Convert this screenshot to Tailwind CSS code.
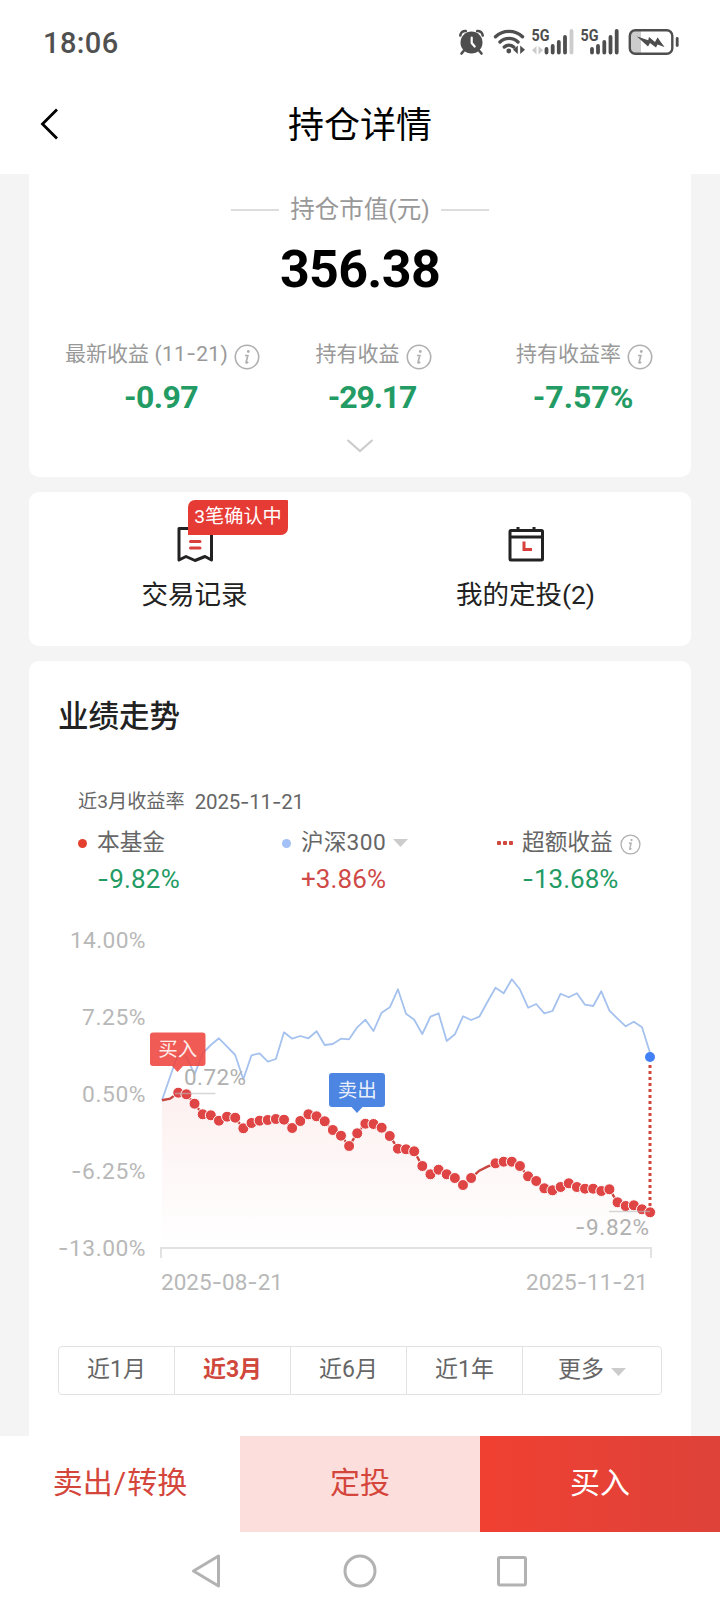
<!DOCTYPE html>
<html lang="zh-CN">
  <head>
    <meta charset="UTF-8" />
    <meta name="viewport" content="width=device-width, initial-scale=1.0" />
    <title>持仓详情</title>
    <script src="https://cdn.jsdelivr.net/npm/@tailwindcss/browser@4"></script>
  </head>

  <body class="w-[720px] h-[1610px] overflow-hidden bg-[#f4f4f4] flex flex-col whitespace-nowrap font-['Roboto','Noto_Sans_CJK_SC',sans-serif] text-[#222]">
    <!-- Status bar -->
    <div class="h-[84px] shrink-0 bg-white flex justify-between pl-[43px]">
      <div class="pt-[28px] text-[29px] leading-[30px] font-medium tracking-[0.4px] text-[#505050]">18:06</div>
      <svg class="w-[270px] h-[84px]" viewBox="450 0 270 84" fill="none" stroke-linecap="round">
        <!-- alarm -->
        <circle cx="471.5" cy="42.5" r="11" fill="#4e4e4e" />
        <path d="M460.3 35.5a5 5 0 0 1 5.5-4.500M482.7 35.5a5 5 0 0 0-5.5-4.500" stroke="#4e4e4e" stroke-width="2.6" />
        <path d="M464 50.5l-2.5 3M479 50.5l2.5 3" stroke="#4e4e4e" stroke-width="2.6" />
        <path d="M471.7 37.5v5.5l3 3.5" stroke="#fff" stroke-width="2.2" />
        <!-- wifi -->
        <path d="M495.5 36.800a19.5 19.5 0 0 1 27 0M500 42a13 13 0 0 1 18 0M504.3 47a7 7 0 0 1 9.4 0" stroke="#4e4e4e" stroke-width="3.4" />
        <circle cx="508.8" cy="51" r="2.4" fill="#4e4e4e" />
        <path d="M517.8 45.500v8.500l-4.800-4.250zM520.2 45.500v8.500l4.800-4.250z" fill="#4e4e4e" />
        <!-- signal 1 -->
        <text x="531.500" y="41" font-size="16.500" font-weight="700" fill="#4e4e4e" textLength="18" lengthAdjust="spacingAndGlyphs">5G</text>
        <path d="M536.500 46v8.500l-4.500-4.250zM538.500 46v8.500l4.500-4.250z" fill="#ccc" />
        <path d="M546.500 49v3.500M552.700 46v6.500M558.800 42v10.500M565 37v15.500" stroke="#4e4e4e" stroke-width="3.800" />
        <path d="M571.500 31v21.500" stroke="#ccc" stroke-width="3.800" />
        <!-- signal 2 -->
        <text x="580.500" y="41" font-size="16.500" font-weight="700" fill="#4e4e4e" textLength="18" lengthAdjust="spacingAndGlyphs">5G</text>
        <path d="M592 49v3.500M598 46v6.500M604.300 42v10.500M610.500 37v15.500M616.700 31v21.500" stroke="#4e4e4e" stroke-width="3.800" />
        <!-- battery -->
        <path d="M635 31h6v22h-6a5 5 0 0 1-5-5v-12a5 5 0 0 1 5-5z" fill="#ccc" />
        <rect x="629.800" y="30.300" width="42.500" height="23.400" rx="5.500" stroke="#4e4e4e" stroke-width="2.400" />
        <path d="M637 36.500l11 4.500 1-4 6 5 2.500-4.500 7 9.500-7-2.500-1.500 3-6-4.500-2 3.500z" fill="#4e4e4e" />
        <path d="M664 47l-8-5 2-4 2 5zM637 36.500l12 4v4z" fill="#4e4e4e" />
        <path d="M677.200 38.500v7" stroke="#4e4e4e" stroke-width="2.800" />
      </svg>
    </div>

    <!-- Title bar -->
    <header class="h-[90px] shrink-0 bg-white grid grid-cols-[120px_1fr_120px]">
      <svg class="w-[120px] h-[90px]" viewBox="0 84 120 90" fill="none">
        <path d="M57 109.500L42.500 124L57 138.500" stroke="#000" stroke-width="2.800" />
      </svg>
      <h1 class="text-center text-[36px] leading-[84px] text-black">持仓详情</h1>
    </header>

    <main class="h-[1262px] shrink-0 overflow-hidden px-[29px] flex flex-col gap-[15px]">
      <!-- Holdings -->
      <section class="h-[303px] shrink-0 bg-white rounded-b-[10px] pt-[20px]">
        <div class="flex items-center justify-center gap-[11px] text-[24.500px] leading-[32px] text-[#999]">
          <span class="w-[48px] h-[2px] bg-[#ddd]"></span>
          <span>持仓市值(元)</span>
          <span class="w-[48px] h-[2px] bg-[#ddd]"></span>
        </div>
        <div class="mt-[14px] text-center text-[52px] leading-[60px] font-bold tracking-[-0.700px] text-black">356.38</div>
        <div class="mt-[37px] flex text-[#999]">
          <div class="w-[267px] flex flex-col items-center">
            <div class="flex items-center gap-[6px] text-[21px] leading-[34px]">
              <span>最新收益<span class="tracking-[0.300px]"> (11<span class="font-['Inter']">-</span>21)</span></span>
              <svg class="size-[26px] mt-[5px]" viewBox="0 0 26 26"><use href="#info" /></svg>
            </div>
            <div class="mt-[8px] pr-[3px] text-[32px] leading-[36px] font-bold tracking-[-0.600px] text-[#239b64]">-0.97</div>
          </div>
          <div class="w-[155px] flex flex-col items-center">
            <div class="flex items-center gap-[6px] text-[21px] leading-[34px]">
              <span>持有收益</span>
              <svg class="size-[26px] mt-[5px]" viewBox="0 0 26 26"><use href="#info" /></svg>
            </div>
            <div class="mt-[8px] pr-[3px] text-[32px] leading-[36px] font-bold tracking-[-1.100px] text-[#239b64]">-29.17</div>
          </div>
          <div class="w-[268px] -mr-[28px] pr-[1px] flex flex-col items-center">
            <div class="flex items-center gap-[6px] text-[21px] leading-[34px]">
              <span>持有收益率</span>
              <svg class="size-[26px] mt-[5px]" viewBox="0 0 26 26"><use href="#info" /></svg>
            </div>
            <div class="mt-[8px] pr-[3px] text-[32px] leading-[36px] font-bold text-[#239b64]">-7.57%</div>
          </div>
        </div>
        <svg class="mx-auto mt-[23px] w-[28px] h-[16px]" viewBox="0 0 28 16" fill="none">
          <path d="M1.500 2L14 13L26.500 2" stroke="#ccc" stroke-width="2.200" />
        </svg>
      </section>

      <!-- Shortcuts -->
      <section class="h-[154px] shrink-0 bg-white rounded-[10px] grid grid-cols-2 text-[26.500px] leading-[36px]">
        <div class="relative flex flex-col items-center pt-[33px]">
          <svg class="w-[38px] h-[38px]" viewBox="0 0 38 38" fill="none">
            <path d="M3 3.500H35.500V35L29 31.500L19 35.500L10 31.500L3 35Z" stroke="#222" stroke-width="3" stroke-linejoin="round" />
            <path d="M14.500 16.500H24M14.500 23H24" stroke="#d8403c" stroke-width="3" stroke-linecap="round" />
          </svg>
          <span class="mt-[14px]">交易记录</span>
          <span class="absolute left-[159px] top-[8px] w-[100px] h-[35px] rounded-tl-[7px] rounded-br-[7px] rounded-tr-[1px] bg-[#e63a35] text-center text-[19.200px] leading-[34px] text-white">3笔确认中</span>
        </div>
        <div class="flex flex-col items-center pt-[33px]">
          <svg class="w-[38px] h-[38px]" viewBox="0 0 38 38" fill="none">
            <rect x="3" y="5.500" width="32.500" height="29.500" rx="1" stroke="#222" stroke-width="3" />
            <path d="M3 12H35.500M11 2V5M27 2V5" stroke="#222" stroke-width="3" />
            <path d="M17 16.500V24.500H25" stroke="#d8403c" stroke-width="3" />
          </svg>
          <span class="mt-[14px]">我的定投(2)</span>
        </div>
      </section>

      <!-- Performance -->
      <section class="h-[783px] shrink-0 bg-white rounded-[10px] px-[29px] pt-[36px]">
        <h2 class="text-[30.500px] leading-[40px] font-medium">业绩走势</h2>
        <div class="mt-[50px] pl-[20px] flex gap-[10px] text-[19.200px] leading-[30px] text-[#666]">
          <span>近3月收益率</span>
          <span class="text-[20.500px] tracking-[-0.200px]">2025<span class="font-['Inter']">-</span>11<span class="font-['Inter']">-</span>21</span>
        </div>
        <div class="mt-[9px] pl-[20px] flex text-[22.700px] leading-[34px] text-[#666]">
          <div class="w-[204px]">
            <div class="flex items-center">
              <span class="size-[9px] mr-[10px] rounded-full bg-[#e5402f]"></span>本基金
            </div>
            <div class="pl-[19px] mt-[2px] text-[26px] tracking-[0.200px] text-[#239b64]"><span class="font-['Inter']">-</span>9.82%</div>
          </div>
          <div class="w-[215px]">
            <div class="flex items-center">
              <span class="size-[9px] mr-[10px] rounded-full bg-[#a3c0f7]"></span>沪深<span class="tracking-[0.500px]">300</span>
              <svg class="ml-[7px] w-[15px] h-[8px]" viewBox="0 0 15 8"><path d="M0 0H15L7.500 8Z" fill="#ccc" /></svg>
            </div>
            <div class="pl-[19px] mt-[2px] text-[26px] tracking-[0.100px] text-[#cf4a47]">+3.86%</div>
          </div>
          <div>
            <div class="flex items-center">
              <span class="flex gap-[2px] mr-[9px]">
                <i class="size-[4px] rounded-[1px] bg-[#d0473d]"></i>
                <i class="size-[4px] rounded-[1px] bg-[#d0473d]"></i>
                <i class="size-[4px] rounded-[1px] bg-[#d0473d]"></i>
              </span>超额收益
              <svg class="ml-[7px] mt-[2px] size-[21px]" viewBox="0 0 26 26"><use href="#info" /></svg>
            </div>
            <div class="pl-[25px] mt-[2px] text-[26px] text-[#239b64]"><span class="font-['Inter']">-</span>13.68%</div>
          </div>
        </div>

        <svg class="-ml-[29px] mt-[14px] w-[662px] h-[390px]" viewBox="29 910 662 390" fill="none">
          <defs>
            <linearGradient id="area" x1="0" y1="0" x2="0" y2="1">
              <stop offset="0" stop-color="#fdf0f0" />
              <stop offset="1" stop-color="#fff" />
            </linearGradient>
          </defs>
          <g id="yAxis" font-size="22.800" fill="#b8b8b8"></g>
          <path id="fundArea" fill="url(#area)" />
          <path d="M161 1258V1248H651V1258" stroke="#e2e2e2" stroke-width="2" />
          <g font-size="22.500" fill="#b8b8b8">
            <text x="161" y="1290" textLength="122">2025<tspan font-family="Inter">-</tspan>08<tspan font-family="Inter">-</tspan>21</text>
            <text x="526" y="1290" textLength="122">2025<tspan font-family="Inter">-</tspan>11<tspan font-family="Inter">-</tspan>21</text>
          </g>
          <polyline id="indexLine" stroke="#a5c1ee" stroke-width="1.800" stroke-linejoin="round" />
          <polyline id="fundLine" stroke="#c9453f" stroke-width="2.400" />
          <path d="M650 1065V1206" stroke="#d0473d" stroke-width="3" stroke-dasharray="3 3" />
          <g id="fundDots" fill="#df4545" stroke="#fff" stroke-width="1"></g>
          <circle cx="650" cy="1057" r="5" fill="#4480f5" />
          <path d="M175 1093.500H215.500M609 1211.500H650" stroke="#bbb" stroke-opacity="0.600" stroke-width="1.500" />
          <g font-size="22.500" fill="#b0b0b0">
            <text x="184" y="1085" textLength="62">0.72%</text>
            <text x="575" y="1235" textLength="74"><tspan font-family="Inter">-</tspan>9.82%</text>
          </g>
          <path d="M153 1032.500H202.500a3 3 0 0 1 3 3V1063a3 3 0 0 1-3 3H183L177.500 1072L172 1066H153a3 3 0 0 1-3-3V1035.500a3 3 0 0 1 3-3Z" fill="#ee453d" fill-opacity="0.880" />
          <path d="M332 1073H382a3 3 0 0 1 3 3V1104a3 3 0 0 1-3 3H362.500L357 1113L351.500 1107H332a3 3 0 0 1-3-3V1076a3 3 0 0 1 3-3Z" fill="#4d85e2" />
          <g font-size="19.500" fill="#fff" fill-opacity="0.900" text-anchor="middle">
            <text x="177.700" y="1056">买入</text>
            <text x="357.300" y="1097">卖出</text>
          </g>
        </svg>

        <!-- Range tabs -->
        <div class="mt-[46px] h-[49px] grid grid-cols-[116px_116px_116px_116px_1fr] border-[1.500px] border-[#e2e2e2] rounded-[4px] text-[23px] leading-[46px] text-center text-[#666]">
          <div class="border-r border-[#e2e2e2]">近1月</div>
          <div class="border-r border-[#e2e2e2] font-bold text-[#d0473b]">近3月</div>
          <div class="border-r border-[#e2e2e2]">近6月</div>
          <div class="border-r border-[#e2e2e2]">近1年</div>
          <div class="h-[46px] flex items-center justify-center gap-[7px]">
            更多
            <svg class="mt-[3px] w-[15px] h-[8px]" viewBox="0 0 15 8"><path d="M0 0H15L7.500 8Z" fill="#ccc" /></svg>
          </div>
        </div>
      </section>
    </main>

    <!-- Actions -->
    <div class="h-[96px] shrink-0 grid grid-cols-3 text-center text-[30px] leading-[94px]">
      <div class="bg-white text-[#d4463b]">卖出<span class="px-[1px]">/</span>转换</div>
      <div class="bg-[#fcdfdc] text-[#d4463b]">定投</div>
      <div class="bg-linear-to-r from-[#f04032] to-[#de4239] text-white">买入</div>
    </div>

    <!-- System navigation -->
    <svg class="w-[720px] h-[78px] shrink-0 bg-white" viewBox="0 1532 720 78" fill="none" stroke="#b2b2b2" stroke-width="3" stroke-linejoin="round">
      <path d="M193.500 1571L218.500 1556V1586Z" />
      <circle cx="360" cy="1571" r="15" />
      <rect x="498.500" y="1557.500" width="27" height="27.500" rx="1.500" />
    </svg>

    <svg class="hidden">
      <symbol id="info" viewBox="0 0 26 26">
        <circle cx="13" cy="13" r="11.700" fill="none" stroke="#b0b0b0" stroke-width="1.600" />
        <circle cx="14.300" cy="7.500" r="1.400" fill="#b0b0b0" />
        <path d="M11 11.500H13.800L12 18.500Q12 19.500 14.300 18" fill="none" stroke="#b0b0b0" stroke-width="1.700" />
      </symbol>
    </svg>

    <script>
      const startX = 162;
      const step = 8.135;
      const baseY = 1247;

      const indexData = [1100.3, 1076.7, 1053.3, 1056.7, 1074.3, 1053.3, 1045, 1038.3, 1046.7, 1055, 1079.3, 1055.3, 1053.3,
        1061.7, 1059, 1032.3, 1038.7, 1036, 1038.3, 1031.3, 1045, 1044, 1038.7, 1039.3, 1027.3, 1019.7, 1031, 1012.7,
        1007.3, 989.3, 1013.7, 1019.7, 1034, 1016.7, 1013.3, 1041, 1034.3, 1016.3, 1020, 1016.7, 1002, 987.7, 993.3,
        979.3, 989.3, 1007.7, 1004, 1013.3, 1011, 993.7, 997.3, 993.3, 1004.7, 1006, 991.3, 1010.7, 1018.7, 1026.3,
        1021.7, 1027.3, 1053];

      const fundData = [1100.3, 1098.7, 1092.7, 1094.3, 1103.7, 1114.3, 1115.3, 1120.7, 1116.7, 1117.7, 1128.3, 1123,
        1120.7, 1120, 1119, 1119.7, 1128, 1121, 1114.3, 1116.3, 1121.3, 1130, 1135.7, 1146, 1133.3, 1123.7, 1124,
        1127.7, 1136, 1148.7, 1149.3, 1151.3, 1166, 1174.3, 1169.7, 1174.3, 1178, 1185, 1178, 1170.7, 1166.7, 1163.3,
        1161.7, 1161.7, 1166, 1176.3, 1181, 1188.3, 1190.3, 1187, 1183.3, 1187, 1188.7, 1188.7, 1191, 1189.3, 1202.3,
        1206, 1205.3, 1209.3, 1212.3];

      const noMarker = [0, 1, 39, 40];

      // label and its left edge
      const yLabels = [["14.00%", 70], ["7.25%", 82], ["0.50%", 82], ["-6.25%", 71], ["-13.00%", 58]];

      const toPoints = (data) => data.map((y, i) => `${(startX + i * step).toFixed(1)},${y}`).join(" ");

      document.getElementById("indexLine").setAttribute("points", toPoints(indexData));
      document.getElementById("fundLine").setAttribute("points", toPoints(fundData));
      document.getElementById("fundArea").setAttribute("d", `M${startX},${baseY} L${toPoints(fundData)} L650,${baseY} Z`);

      document.getElementById("fundDots").innerHTML = fundData
        .map((y, i) => (noMarker.includes(i) ? "" : `<circle cx="${startX + i * step}" cy="${y}" r="5.5" />`))
        .join("");

      document.getElementById("yAxis").innerHTML = yLabels
        .map(([label, x], i) => {
          const text = label.replace("-", '<tspan font-family="Inter">-</tspan>');
          return `<text x="${x}" y="${948.3 + i * 76.8}" textLength="${145.5 - x}">${text}</text>`;
        })
        .join("");
    </script>
  </body>
</html>
